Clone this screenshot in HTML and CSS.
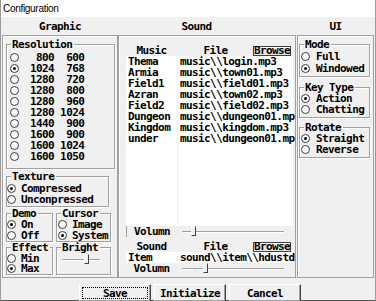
FILE: index.html
```html
<!DOCTYPE html>
<html lang="en">
<head>
  <meta charset="UTF-8" />
  <title>Configuration</title>
  <link rel="stylesheet" href="styles.css">
</head>
<body>
  <div class="window">
    <div class="titlebar">Configuration</div>

    <div class="tabs">
      <div class="tab tab-graphic">Graphic</div>
      <div class="tab tab-sound">Sound</div>
      <div class="tab tab-ui">UI</div>
    </div>

    <div class="panels">
      <!-- Graphic -->
      <div class="panel panel-graphic">
        <div class="group group-res">
          <div class="legend">Resolution</div>
          <div class="opt res"><span class="radio"></span><span class="label"> 800  600</span></div>
          <div class="opt res"><span class="radio checked"></span><span class="label">1024  768</span></div>
          <div class="opt res"><span class="radio"></span><span class="label">1280  720</span></div>
          <div class="opt res"><span class="radio"></span><span class="label">1280  800</span></div>
          <div class="opt res"><span class="radio"></span><span class="label">1280  960</span></div>
          <div class="opt res"><span class="radio"></span><span class="label">1280 1024</span></div>
          <div class="opt res"><span class="radio"></span><span class="label">1440  900</span></div>
          <div class="opt res"><span class="radio"></span><span class="label">1600  900</span></div>
          <div class="opt res"><span class="radio"></span><span class="label">1600 1024</span></div>
          <div class="opt res"><span class="radio"></span><span class="label">1600 1050</span></div>
        </div>

        <div class="group group-texture">
          <div class="legend">Texture</div>
          <div class="opt"><span class="radio checked"></span><span class="label">Compressed</span></div>
          <div class="opt"><span class="radio"></span><span class="label">Unconpressed</span></div>
        </div>

        <div class="pair pair-top">
          <div class="group group-small">
            <div class="legend">Demo</div>
            <div class="opt"><span class="radio checked"></span><span class="label">On</span></div>
            <div class="opt"><span class="radio"></span><span class="label">Off</span></div>
          </div>
          <div class="group group-wide">
            <div class="legend">Cursor</div>
            <div class="opt"><span class="radio"></span><span class="label">Image</span></div>
            <div class="opt"><span class="radio checked"></span><span class="label">System</span></div>
          </div>
        </div>

        <div class="pair pair-bottom">
          <div class="group group-small">
            <div class="legend">Effect</div>
            <div class="opt"><span class="radio"></span><span class="label">Min</span></div>
            <div class="opt"><span class="radio checked"></span><span class="label">Max</span></div>
          </div>
          <div class="group group-wide">
            <div class="legend">Bright</div>
            <div class="slider slider-bright">
              <div class="track"></div>
              <div class="thumb" style="left: 22px"></div>
            </div>
          </div>
        </div>
      </div>

      <!-- Sound -->
      <div class="panel panel-sound">
        <div class="grid head">
          <div class="cell center">Music</div>
          <div class="cell file-head"><span class="file-label">File</span><button class="browse">Browse</button></div>
        </div>
        <div class="grid list">
          <div class="col white">
            <div class="row">Thema</div>
            <div class="row">Armia</div>
            <div class="row">Field1</div>
            <div class="row">Azran</div>
            <div class="row">Field2</div>
            <div class="row">Dungeon</div>
            <div class="row">Kingdom</div>
            <div class="row">under</div>
          </div>
          <div class="col white">
            <div class="row">music\\login.mp3</div>
            <div class="row">music\\town01.mp3</div>
            <div class="row">music\\field01.mp3</div>
            <div class="row">music\\town02.mp3</div>
            <div class="row">music\\field02.mp3</div>
            <div class="row">music\\dungeon01.mp</div>
            <div class="row">music\\kingdom.mp3</div>
            <div class="row">music\\dungeon01.mp</div>
          </div>
        </div>
        <div class="grid line">
          <div class="cell center vol-box">Volumn</div>
          <div class="cell">
            <div class="slider slider-vol">
              <div class="track"></div>
              <div class="thumb" style="left: 9px"></div>
            </div>
          </div>
        </div>
        <div class="grid head head-sound">
          <div class="cell center">Sound</div>
          <div class="cell file-head"><span class="file-label">File</span><button class="browse">Browse</button></div>
        </div>
        <div class="grid line">
          <div class="cell white row">Item</div>
          <div class="cell white row">sound\\item\\hdustd</div>
        </div>
        <div class="grid line">
          <div class="cell center">Volumn</div>
          <div class="cell">
            <div class="slider slider-vol">
              <div class="track"></div>
              <div class="thumb" style="left: 21px"></div>
            </div>
          </div>
        </div>
      </div>

      <!-- UI -->
      <div class="panel panel-ui">
        <div class="group group-ui group-mode">
          <div class="legend">Mode</div>
          <div class="opt"><span class="radio"></span><span class="label">Full</span></div>
          <div class="opt"><span class="radio checked"></span><span class="label">Windowed</span></div>
        </div>
        <div class="group group-ui">
          <div class="legend">Key Type</div>
          <div class="opt"><span class="radio checked"></span><span class="label">Action</span></div>
          <div class="opt"><span class="radio"></span><span class="label">Chatting</span></div>
        </div>
        <div class="group group-ui">
          <div class="legend">Rotate</div>
          <div class="opt"><span class="radio checked"></span><span class="label">Straight</span></div>
          <div class="opt"><span class="radio"></span><span class="label">Reverse</span></div>
        </div>
      </div>
    </div>

    <div class="buttons">
      <button class="btn btn-default">Save</button>
      <button class="btn">Initialize</button>
      <button class="btn">Cancel</button>
    </div>
  </div>
</body>
</html>
```

FILE: styles.css
```css
* { margin: 0; padding: 0; box-sizing: border-box; }
body {
  width: 376px;
  height: 301px;
  overflow: hidden;
  background: #f0f0f0;
  color: #000;
  font-family: "DejaVu Sans Mono", "Liberation Mono", monospace;
  font-weight: bold;
  font-size: 11px;
  letter-spacing: -0.6px;
  line-height: 11px;
}
.window {
  height: 301px;
  border-left: 1px solid #9a9a9a;
  border-right: 1px solid #9a9a9a;
  border-bottom: 1px solid #555;
}
.titlebar {
  height: 17px;
  background: #fff;
  padding-left: 2px;
  font-family: "Liberation Sans", Arial, sans-serif;
  font-weight: normal;
  font-size: 10px;
  letter-spacing: -0.3px;
  line-height: 17px;
}

/* tab captions */
.tabs {
  display: flex;
  height: 18px;
  margin-left: 1px;
  align-items: center;
}
.tab { text-align: center; }
.tab-graphic { width: 116px; }
.tab-sound { width: 178px; padding-right: 21px; }
.tab-ui { width: 77px; margin-left: 1px; }

/* panels */
.panels {
  display: flex;
  margin-left: 1px;
  height: 243px;
}
.panel {
  border: 1px solid #a0a0a0;
  box-shadow: inset 1px 1px 0 #fff;
}
.panel-graphic { width: 116px; padding: 8px 2px 0 3px; }
.panel-sound { width: 178px; padding: 9px 2px 0 7px; }
.panel-ui { width: 77px; margin-left: 1px; padding: 8px 3px 0 1px; }

/* group boxes */
.group {
  border: 1px solid #a0a0a0;
  box-shadow: 1px 1px 0 #fff, inset 1px 1px 0 #fff;
}
.legend {
  display: table;
  margin: -5px 0 1px 4px;
  padding: 0 2px 0 1px;
  background: #f0f0f0;
  line-height: 9px;
}
.group-res { padding-bottom: 6px; }
.group-res .legend { margin-bottom: 3px; }
.group-texture { margin: 7px 6px 0 0; padding-bottom: 1px; }
.group-texture .legend { margin-bottom: 2px; }

.pair { display: flex; gap: 3px; }
.pair-top { margin-top: 6px; }
.pair-bottom { margin-top: 5px; }
.pair-bottom .opt { height: 10.5px; }
.group-small { width: 47px; }
.group-wide { width: 55px; }
.group-wide .radio { margin-left: 1px; }
.group-wide .label { margin-left: 5px; }

.group-ui { margin-bottom: 9px; padding-bottom: 2px; }
.group-ui .radio { margin-left: 1px; }
.group-ui .label { margin-left: 6px; }
.group-mode { margin-bottom: 10px; }
.group-mode .opt { height: 12px; }

/* radio options */
.opt {
  display: flex;
  align-items: center;
  height: 11px;
  white-space: pre;
}
.radio {
  width: 9px;
  height: 9px;
  flex: none;
  border: 1px solid #3c3c3c;
  border-radius: 50%;
  background: #fff;
  display: flex;
  align-items: center;
  justify-content: center;
}
.radio.checked::after {
  content: "";
  width: 3px;
  height: 3px;
  border-radius: 50%;
  background: #000;
}
.label { margin-left: 5px; }
.res .radio { margin-left: 3px; }
.res .label { margin-left: 11px; }

/* sliders */
.slider {
  position: relative;
  height: 11px;
  display: flex;
  align-items: center;
}
.track {
  width: 100%;
  height: 2px;
  border-top: 1px solid #a0a0a0;
  border-bottom: 1px solid #fff;
}
.thumb {
  position: absolute;
  top: 0;
  width: 5px;
  height: 10px;
  background: #f0f0f0;
  border-left: 1px solid #fff;
  border-top: 1px solid #fff;
  border-right: 1px solid #404040;
  border-bottom: 1px solid #404040;
}
.slider-bright { width: 38px; margin: 2px 0 0 5px; }
.slider-vol { width: 102px; margin-left: 4px; }

/* sound lists */
.grid {
  display: grid;
  grid-template-columns: 51px 115px;
  column-gap: 1px;
}
.head { height: 11px; }
.head-sound { margin-top: 4px; }
.cell { height: 11px; overflow: hidden; }
.center { text-align: center; }
.file-head { display: flex; align-items: flex-end; }
.file-label { flex: 1; text-align: center; }
.browse {
  width: 38px;
  height: 10px;
  margin-right: 2px;
  font: inherit;
  letter-spacing: inherit;
  line-height: 8px;
  color: #000;
  background: #e6e6e6;
  border: 1px solid #404040;
  box-shadow: inset 1px 1px 0 #fff;
}
.list { height: 170px; }
.white { background: #fff; }
.row { height: 11px; padding-left: 2px; white-space: pre; overflow: visible; }
.line { height: 11px; }
.vol-box { border-left: 1px solid #a0a0a0; }

/* bottom buttons */
.buttons {
  display: flex;
  gap: 3px;
  padding: 6px 0 0 78px;
}
.btn {
  width: 72px;
  height: 18px;
  font: inherit;
  letter-spacing: inherit;
  color: #000;
  background: #f0f0f0;
  border: 1px solid;
  border-color: #fff #404040 #404040 #fff;
  box-shadow: inset -1px -1px 0 #a0a0a0;
}
.btn-default {
  outline: 1px dotted #000;
  outline-offset: -4px;
}
```
